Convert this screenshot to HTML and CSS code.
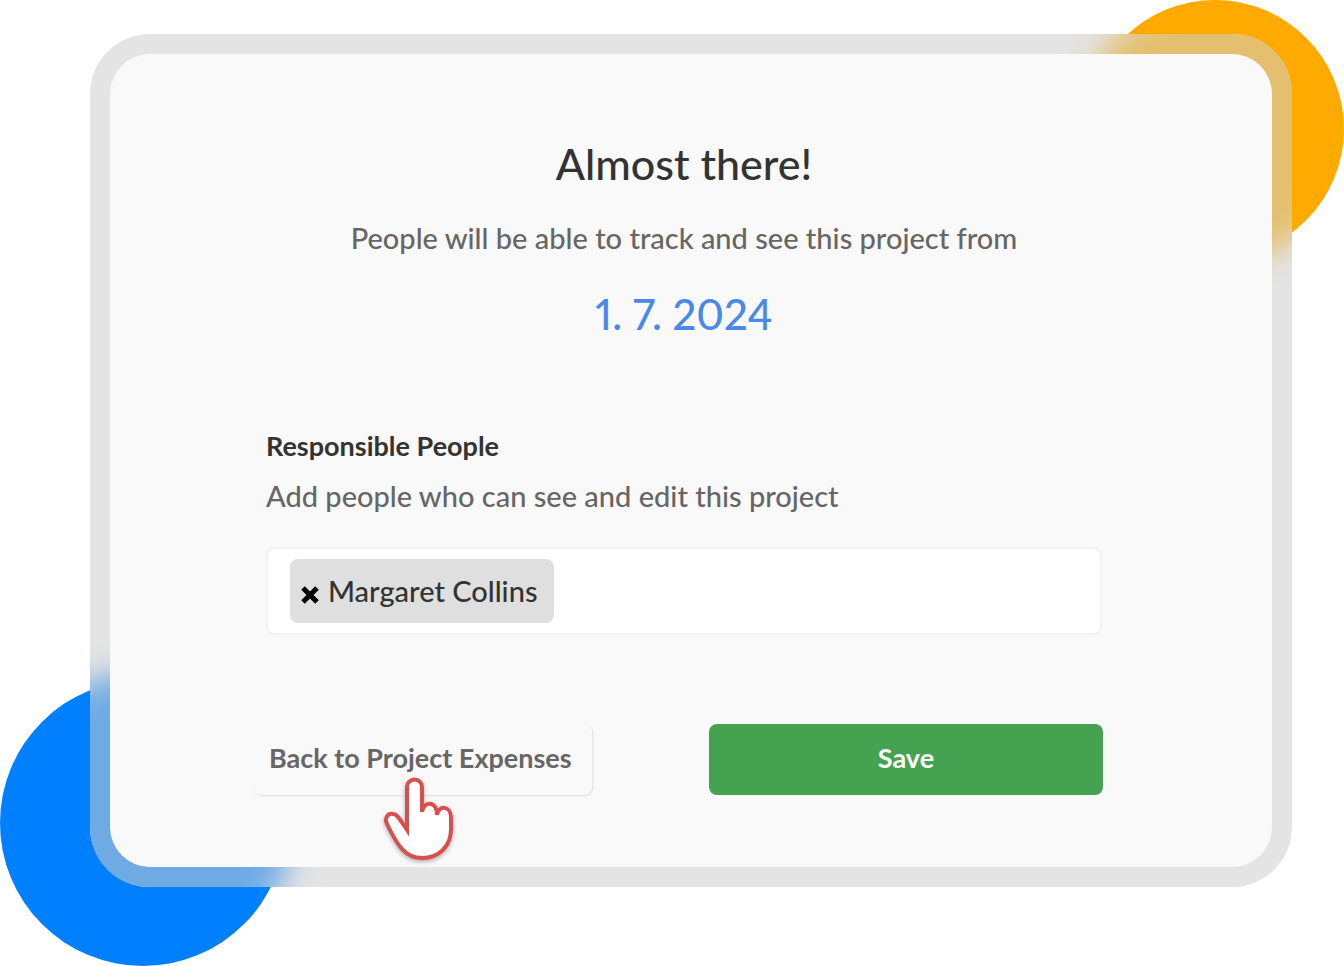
FILE: index.html
```html
<!DOCTYPE html>
<html lang="en">
<head>
    <meta charset="utf-8">
    <meta name="viewport" content="width=device-width, initial-scale=1">
    <title>Almost there!</title>
    <link rel="stylesheet" href="styles.css">
</head>
<body>
<div class="circle orange"></div>
<div class="circle blue"></div>
<main class="frame">
    <form class="panel">
        <h1>Almost there!</h1>
        <p class="intro">People will be able to track and see this project from</p>
        <p class="date">1. 7. 2024</p>

        <label class="title" for="people">Responsible People</label>
        <p class="hint" id="people-hint">Add people who can see and edit this project</p>
        <div class="people-box">
            <span class="tag">
                <button type="button" class="remove" aria-label="Remove Margaret Collins">
                    <svg width="18" height="18" viewBox="0 0 18 18"><path d="M2 2l14 14M16 2L2 16" stroke="#000" stroke-width="5"/></svg>
                </button>
                Margaret Collins
            </span>
            <input type="text" id="people" aria-describedby="people-hint">
        </div>

        <div class="actions">
            <div class="back-wrap">
                <button type="button" class="back">Back to Project Expenses</button>
                <svg class="hand" width="76" height="90" viewBox="0 0 76 90" aria-hidden="true">
                    <path d="M27 57V14a7.500 7.500 0 0 1 15 0V39C43 28 57 27 57 42C58 32 71 32 71 45V56C71 73 59 85 42 85C26 85 18 74 7 51C4 45 8 40 13 41C17 41 19 45 27 57z" fill="#fff" stroke="#d94f4b" stroke-width="4"/>
                </svg>
            </div>
            <button type="submit" class="save">Save</button>
        </div>
    </form>
</main>
</body>
</html>
```
FILE: styles.css
```css
* {
    box-sizing: border-box;
}

body {
    margin: 0;
    min-height: 100vh;
    padding: 34px 52px 79px 90px;
    position: relative;
    overflow-x: hidden;
    background: #fff;
    font-family: Lato, "Liberation Sans", sans-serif;
    font-size: 29px;
    font-weight: 500;
    line-height: 32px;
    color: #666;
}

/* circles behind the glass frame */
.circle {
    position: absolute;
    border-radius: 50%;
}

.orange {
    top: 0;
    right: 0;
    width: 258px;
    height: 258px;
    background: #ffaa00;
}

.blue {
    left: 0;
    bottom: 0;
    width: 286px;
    height: 286px;
    background: #0080ff;
}

.frame {
    position: relative;
    padding: 20px;
    border-radius: 60px;
    overflow: hidden;
    background: #e4e4e4;
}

/* frosted copies of the circles, seen through the frame */
.frame::before, .frame::after {
    content: "";
    position: absolute;
    border-radius: 50%;
    filter: blur(15px);
}

.frame::before {
    top: -38px;
    right: -56px;
    width: 270px;
    height: 270px;
    background: #e4bf70;
}

.frame::after {
    left: -94px;
    bottom: -83px;
    width: 298px;
    height: 298px;
    background: #70aae4;
}

.panel {
    position: relative;
    z-index: 1;
    padding: 86px 170px 72px 156px;
    border-radius: 40px;
    background: #f9f9f9;
}

h1, .date {
    margin: 0;
    font-size: 43px;
    line-height: 48px;
    font-weight: 500;
    text-align: center;
}

h1 {
    color: #333;
}

.intro {
    margin: 34px 0 36px;
    text-align: center;
}

.date {
    font-size: 42px;
    font-variant-numeric: proportional-nums;
    color: #4a89e8;
}

.title {
    display: block;
    margin-top: 92px;
    font-size: 27px;
    font-weight: 700;
    color: #333;
}

.hint {
    margin: 18px 0 35px;
}

.people-box {
    display: flex;
    align-items: center;
    height: 88px;
    padding: 0 22px;
    border: 2px solid #f2f2f2;
    border-radius: 8px;
    background: #fff;
}

.tag {
    display: flex;
    align-items: center;
    gap: 9px;
    height: 64px;
    padding: 0 16px 0 11px;
    border-radius: 8px;
    background: #dfdfdf;
    color: #333;
    white-space: nowrap;
}

.remove {
    display: flex;
    padding: 8px 0 0;
    border: none;
    background: none;
}

#people {
    flex: 1;
    min-width: 0;
    height: 64px;
    border: none;
    outline: none;
    background: none;
    font: inherit;
}

.actions {
    display: grid;
    grid-template-columns: 339fr 394fr;
    gap: 117px;
    margin: 89px -1px 0 -13px;
}

.back-wrap {
    position: relative;
}

.back, .save {
    width: 100%;
    height: 71px;
    padding: 0 16px 4px;
    border: none;
    border-radius: 8px;
    font-family: inherit;
    font-size: 27px;
    line-height: 32px;
    font-weight: 700;
}

.back {
    background: #f9f9f9;
    box-shadow: 1px 1px 2px #ddd;
    color: #666;
    text-align: left;
    white-space: nowrap;
}

.save {
    background: #45a251;
    color: #fff;
}

.hand {
    position: absolute;
    top: 49px;
    left: 127px;
    filter: drop-shadow(0 2px 2px rgba(0, 0, 0, 0.3));
}
```
